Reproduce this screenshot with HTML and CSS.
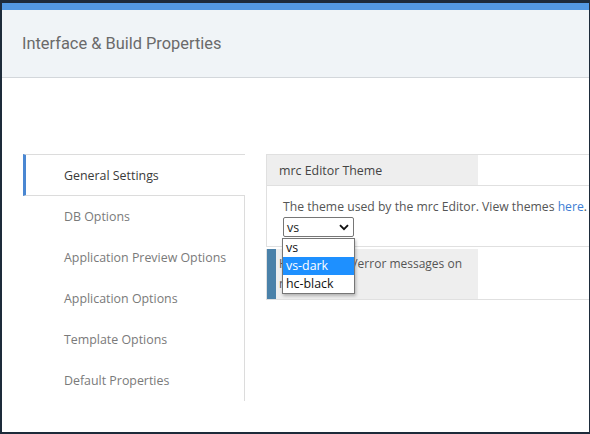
FILE: index.html
```html
<!DOCTYPE html>
<html>
<head>
<meta charset="utf-8">
<link rel="stylesheet" href="styles.css">
</head>
<body>
<div class="app">
  <div class="topbar"></div>
  <div class="header"><h1 class="title">Interface &amp; Build Properties</h1></div>
  <div class="content">
    <ul class="nav">
      <li class="nav-item active">General Settings</li>
      <li class="nav-item">DB Options</li>
      <li class="nav-item">Application Preview Options</li>
      <li class="nav-item">Application Options</li>
      <li class="nav-item">Template Options</li>
      <li class="nav-item">Default Properties</li>
    </ul>
    <div class="main">
      <div class="block">
        <div class="block-head"><div class="head-cell">mrc Editor Theme</div></div>
        <div class="block-body">
          <div class="desc">The theme used by the mrc Editor. View themes <span class="link">here</span>.</div>
          <div class="select-wrap">
            <div class="select">
              <span>vs</span>
              <svg class="chev" width="10" height="7" viewBox="0 0 10 7"><path d="M1 1.2 L5 5.2 L9 1.2" fill="none" stroke="#111" stroke-width="1.9"/></svg>
            </div>
            <ul class="dropdown">
              <li class="opt">vs</li>
              <li class="opt selected">vs-dark</li>
              <li class="opt">hc-black</li>
            </ul>
          </div>
        </div>
      </div>
      <div class="block block2">
        <div class="head-cell marked"><div>Hide warning/error messages on<br>mrc Editor.</div></div>
      </div>
    </div>
  </div>
</div>
</body>
</html>
```

FILE: styles.css
```css
html, body {
  margin: 0;
  padding: 0;
}
body {
  background: #1d2b3a;
  width: 590px;
  height: 434px;
  box-sizing: border-box;
  padding: 3px 1px 2px 2px;
  overflow: hidden;
  font-family: "Open Sans", "Noto Sans", sans-serif;
}
.app {
  background: #ffffff;
  height: 100%;
  overflow: hidden;
}
.topbar {
  height: 7px;
  background: #5399e2;
}
.header {
  height: 67px;
  background: #f0f4f7;
  border-bottom: 1px solid #d3d7db;
  display: flex;
  align-items: center;
  padding-left: 20px;
}
.title {
  margin: 0;
  font-family: Roboto, "Liberation Sans", sans-serif;
  font-weight: 400;
  font-size: 16.4px;
  color: #6a6a6a;
}
.content {
  display: flex;
  align-items: flex-start;
  padding: 76px 0 0 21px;
}
.nav {
  list-style: none;
  margin: 0;
  padding: 0;
  width: 222px;
  flex: none;
}
.nav-item {
  height: 41px;
  box-sizing: border-box;
  display: flex;
  align-items: center;
  padding-left: 41px;
  border-right: 1px solid #dcdcdc;
  font-size: 12.4px;
  color: #7a7a7a;
}
.nav-item.active {
  height: 42px;
  border-right: none;
  border-top: 1px solid #dcdcdc;
  border-bottom: 1px solid #dcdcdc;
  border-left: 3px solid #4a87d2;
  padding-left: 38px;
  color: #3a3a3a;
}
.main {
  margin-left: 21px;
  width: 340px;
  flex: none;
}
.block {
  border: 1px solid #e0e0e0;
  border-right: none;
}
.block-head {
  border-bottom: 1px solid #e0e0e0;
}
.head-cell {
  width: 211px;
  box-sizing: border-box;
  background: #eeeeee;
  padding: 0 12px;
  font-size: 12.4px;
  color: #444;
  height: 30px;
  display: flex;
  align-items: center;
  white-space: nowrap;
}
.block-body {
  padding: 10px 0 0 16px;
  height: 60px;
  box-sizing: border-box;
}
.desc {
  font-size: 12.2px;
  color: #555;
  line-height: 21px;
  white-space: nowrap;
}
.link {
  color: #3c7dd4;
}
.select-wrap {
  position: relative;
  width: 71px;
}
.select {
  height: 20px;
  box-sizing: border-box;
  border: 1px solid #767676;
  border-radius: 2px;
  display: flex;
  align-items: center;
  justify-content: space-between;
  padding: 0 4px 0 3px;
  font-size: 12.4px;
  color: #222;
}
.chev {
  display: block;
}
.dropdown {
  position: absolute;
  left: -1px;
  top: 21px;
  width: 73px;
  box-sizing: border-box;
  margin: 0;
  padding: 0;
  list-style: none;
  background: #fff;
  border: 1px solid #767676;
  box-shadow: 1px 2px 3px rgba(0,0,0,0.25);
  z-index: 5;
}
.opt {
  height: 18px;
  line-height: 18px;
  padding-left: 3px;
  font-size: 12.4px;
  color: #111;
}
.opt.selected {
  background: #1e90ff;
  color: #fff;
}
.block2 {
  margin-top: 2px;
  border-top: none;
}
.head-cell.marked {
  height: 50px;
  border-left: 9px solid #4a81a9;
  padding-left: 3px;
  line-height: 20px;
  color: #555;
  font-size: 12px;
}
```
